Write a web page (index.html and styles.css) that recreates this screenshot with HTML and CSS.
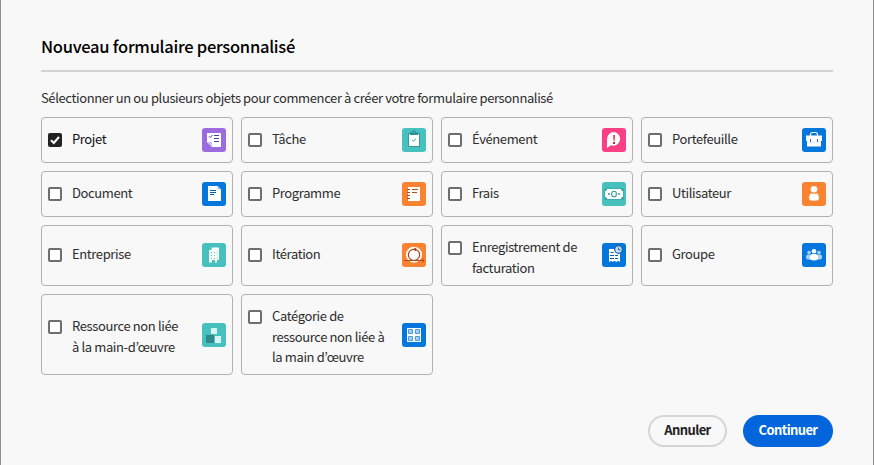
FILE: index.html
```html
<!DOCTYPE html>
<html lang="fr">
<head>
<meta charset="utf-8">
<title>Nouveau formulaire personnalisé</title>
<link rel="stylesheet" href="styles.css">
</head>
<body>
<main class="dialog">
  <h1 class="title">Nouveau formulaire personnalisé</h1>
  <p class="intro">Sélectionner un ou plusieurs objets pour commencer à créer votre formulaire personnalisé</p>
  <div class="grid">
    <label class="card"><span class="option"><span class="box checked"><svg viewBox="0 0 14 14"><path d="M3 7.200l2.800 2.800 5.200-6" fill="none" stroke="#fff" stroke-width="2.100"/></svg></span><span class="text selected">Projet</span></span>
      <svg class="icon purple" viewBox="0 0 24 24"><path d="M5 5h14v14h-9l-5-5z" fill="#fff"/><path d="M5 14h5v5z" fill="#d5bdf3"/><path d="M7 8.300l1.200 1.200 2.300-2.500" fill="none" stroke="#4b3a9a"/><path d="M12 7.500h5M12 10.500h5M12 13.500h5" stroke="#4b3a9a" stroke-width="1"/></svg></label>
    <label class="card"><span class="option"><span class="box"></span><span class="text">Tâche</span></span>
      <svg class="icon teal" viewBox="0 0 24 24"><path d="M6 5h12v14H6z" fill="#2f9b9c"/><path d="M7 6h10v12H7z" fill="#fff"/><path d="M8 7V4.500h2a2 2 0 0 1 4 0h2V7z" fill="#2b8f91"/><circle cx="12" cy="4.500" r=".8" fill="#46c1bd"/><path d="M10.200 12l1.300 1.300 2.500-2.800" fill="none" stroke="#38aaa8"/></svg></label>
    <label class="card"><span class="option"><span class="box"></span><span class="text">Événement</span></span>
      <svg class="icon pink" viewBox="0 0 24 24"><path d="M12.200 4a6.900 6.900 0 1 1-3.400 13.300L5 20v-9a7 7 0 0 1 7.200-7z" fill="#fff"/><path d="M11.200 7h1.800l-.4 6h-1z" fill="#d7373f"/><path d="M11 14h2v2h-2z" fill="#c9252d"/></svg></label>
    <label class="card"><span class="option"><span class="box"></span><span class="text">Portefeuille</span></span>
      <svg class="icon blue" viewBox="0 0 24 24"><path d="M8.500 8V6.500a2 2 0 0 1 2-2h3a2 2 0 0 1 2 2V8" fill="none" stroke="#fff" stroke-width="1.200"/><path d="M4 7.500h16V13H4zM5 12h14v6.500H5z" fill="#fff"/><path d="M5 13.500q7 2.400 14 0" fill="none" stroke="#d7e9fa" stroke-width=".8"/><path d="M8.500 11v3M15.500 11v3" stroke="#1d6eb5"/></svg></label>

    <label class="card"><span class="option"><span class="box"></span><span class="text">Document</span></span>
      <svg class="icon blue" viewBox="0 0 24 24"><path d="M6 4h9.500L19 7.500V19H6z" fill="#fff"/><path d="M15.500 4L19 7.500h-3.500z" fill="#a9cdf0"/><path d="M8 8.500h6M8 10.500h6M8 12.500h4" stroke="#0b5baa" stroke-width="1"/></svg></label>
    <label class="card"><span class="option"><span class="box"></span><span class="text">Programme</span></span>
      <svg class="icon orange" viewBox="0 0 24 24"><path d="M6 5h12v14H6z" fill="#fff"/><path d="M5 7.500h3M5 10.500h3M5 13.500h3M5 16.500h3M10 7.500h6M10 10.500h5" stroke="#b24a16" stroke-width="1"/></svg></label>
    <label class="card"><span class="option"><span class="box"></span><span class="text">Frais</span></span>
      <svg class="icon teal" viewBox="0 0 24 24"><path d="M2.500 6.500h19v11h-19z" fill="#2f9b9c"/><path d="M5 7h14a2 2 0 0 0 2 2v6a2 2 0 0 0-2 2H5a2 2 0 0 0-2-2V9a2 2 0 0 0 2-2z" fill="#fff"/><ellipse cx="12" cy="12" rx="2.400" ry="2.800" fill="#fff" stroke="#2f9b9c" stroke-width="1.100"/><circle cx="7" cy="12" r=".9" fill="#2b8f91"/><circle cx="17" cy="12" r=".9" fill="#2b8f91"/></svg></label>
    <label class="card"><span class="option"><span class="box"></span><span class="text">Utilisateur</span></span>
      <svg class="icon orange" viewBox="0 0 24 24"><circle cx="12" cy="7.200" r="3.300" fill="#fff"/><path d="M9 11.200q3 1.300 6 0c1.400 1 2 2.900 2 5 0 1.800-1.500 2.500-5 2.500s-5-.7-5-2.500c0-2.100.6-4 2-5z" fill="#fff"/></svg></label>

    <label class="card raised"><span class="option"><span class="box"></span><span class="text">Entreprise</span></span>
      <svg class="icon teal" viewBox="0 0 24 24"><path d="M9.500 4.500H17V17h-2V7H9.500z" fill="#fff"/><path d="M7 7h8v12.500h-2V17h-3v2.500H7z" fill="#fff"/><path d="M9.500 9v7M12.500 9v7" stroke="#46c1bd" stroke-width=".9" stroke-dasharray="1.200 1.800"/><path d="M15.200 6.500V17" stroke="#9edfdc" stroke-width=".6"/></svg></label>
    <label class="card raised"><span class="option"><span class="box"></span><span class="text">Itération</span></span>
      <svg class="icon orange" viewBox="0 0 24 24"><circle cx="12" cy="11.700" r="8" fill="#fff"/><circle cx="12" cy="11.900" r="5.600" fill="#fff" stroke="#a84315" stroke-width="1.200"/><path d="M2 17.500h20M20.500 16l1.800 1.500-1.800 1.500" fill="none" stroke="#a64113" stroke-width=".9"/><path d="M11 6.300l3.200-1.800v4z" fill="#a64113"/></svg></label>
    <label class="card raised"><span class="option"><span class="box"></span><span class="text">Enregistrement de<br>facturation</span></span>
      <svg class="icon blue" viewBox="0 0 24 24"><path d="M7 6h11v13l-1.800-1.200-1.800 1.200-1.900-1.200-1.800 1.200L9 17.800 7 19z" fill="#fff"/><path d="M8 12.500h4M8 15.500h4M13 12.500h3M13 15.500h3" stroke="#0b5baa" stroke-width="1"/><path d="M8.500 9.500h3" stroke="#0b5baa"/><circle cx="16.500" cy="6.500" r="3.800" fill="#c4dff7" stroke="#1a5f9f" stroke-width="1.200"/><path d="M16.500 4.500v2.300h2" fill="none" stroke="#0b5baa" stroke-width=".9"/></svg></label>
    <label class="card raised"><span class="option"><span class="box"></span><span class="text">Groupe</span></span>
      <svg class="icon blue" viewBox="0 0 24 24"><g fill="#a9d0f5"><circle cx="7" cy="9.500" r="1.800"/><circle cx="17" cy="9.500" r="1.800"/><rect x="4" y="11.500" width="6" height="5" rx="2"/><rect x="14" y="11.500" width="6" height="5" rx="2"/></g><circle cx="12" cy="8.300" r="2.300" fill="#fff"/><path d="M10 11h4c1.600.7 2.200 2.300 2.200 4 0 1.700-1.600 2.500-4.200 2.500S7.800 16.700 7.800 15c0-1.700.6-3.300 2.200-4z" fill="#fff"/></svg></label>

    <label class="card"><span class="option"><span class="box"></span><span class="text">Ressource non liée<br>à la main-d’œuvre</span></span>
      <svg class="icon teal" viewBox="0 0 24 24"><path d="M9 5h6v6H9zM13 13h6v7h-6z" fill="#daf2f1"/><path d="M4 12h8v8H4z" fill="#2f898b"/></svg></label>
    <label class="card"><span class="option"><span class="box"></span><span class="text">Catégorie de<br>ressource non liée à<br>la main d’œuvre</span></span>
      <svg class="icon blue" viewBox="0 0 24 24"><path d="M5 5h14v14H5z" fill="#fff"/><path d="M6.500 6.500h4v4h-4zM13.500 6.500h4v4h-4zM6.500 13.500h4v4h-4zM13.500 13.500h4v4h-4z" fill="#a5cdf3" stroke="#4a98df" stroke-width="1"/></svg></label>
  </div>
  <div class="actions">
    <button class="btn cancel">Annuler</button>
    <button class="btn primary">Continuer</button>
  </div>
</main>
</body>
</html>
```
FILE: styles.css
```css
* { box-sizing: border-box; }
body {
  margin: 0;
  font-family: "Noto Sans CJK JP", "Noto Sans", sans-serif;
  color: #2c2c2c;
}
.dialog {
  height: 465px;
  padding: 35px 40px 0;
  background: #f8f8f8;
  border: solid #909090;
  border-width: 0 1px;
}
.title {
  margin: 0;
  height: 37px;
  border-bottom: 2px solid #d3d3d3;
  font-size: 16.5px;
  line-height: 22px;
  font-weight: 500;
  letter-spacing: -.27px;
  color: #000;
}
.intro {
  margin: 16px 0 9px;
  font-size: 13px;
  line-height: 20px;
  letter-spacing: -.38px;
  white-space: nowrap;
}
.grid {
  display: grid;
  grid-template-columns: repeat(4, 192px);
  grid-template-rows: 46px 46px 61px 81px;
  gap: 8px;
}
.card {
  display: flex;
  align-items: center;
  justify-content: space-between;
  padding: 0 6px;
  border: 1px solid #b1b1b1;
  border-radius: 4px;
}
.raised { padding-bottom: 1px; }
.option {
  display: flex;
  min-height: 32px;
  gap: 10px;
}
.box {
  flex: none;
  width: 14px;
  height: 14px;
  margin-top: 9px;
  border: 2px solid #6e6e6e;
  border-radius: 2px;
  background: #fff;
}
.checked {
  border: 0;
  background: #222;
}
.checked svg { display: block; }
.text {
  padding: 5px 0 0;
  font-size: 13px;
  line-height: 20.8px;
  letter-spacing: -.38px;
  white-space: nowrap;
}
.selected { color: #111; }
.icon {
  flex: none;
  width: 24px;
  height: 24px;
  border-radius: 3px;
}
.purple { background: #9d6be0; }
.teal { background: #46c1bd; }
.pink { background: #fa3f85; }
.blue { background: #0477dc; }
.orange { background: #fa8332; }
.actions {
  display: flex;
  justify-content: flex-end;
  gap: 16px;
  margin-top: 40px;
}
.btn {
  height: 32px;
  padding: 0 0 3px;
  border: 0;
  border-radius: 16px;
  font-family: inherit;
  font-size: 13px;
  font-weight: 700;
  letter-spacing: -.6px;
}
.cancel {
  width: 79px;
  border: 2px solid #d5d5d5;
  background: transparent;
  color: #222;
}
.primary {
  width: 90px;
  background: #0265dc;
  color: #fff;
}
```
